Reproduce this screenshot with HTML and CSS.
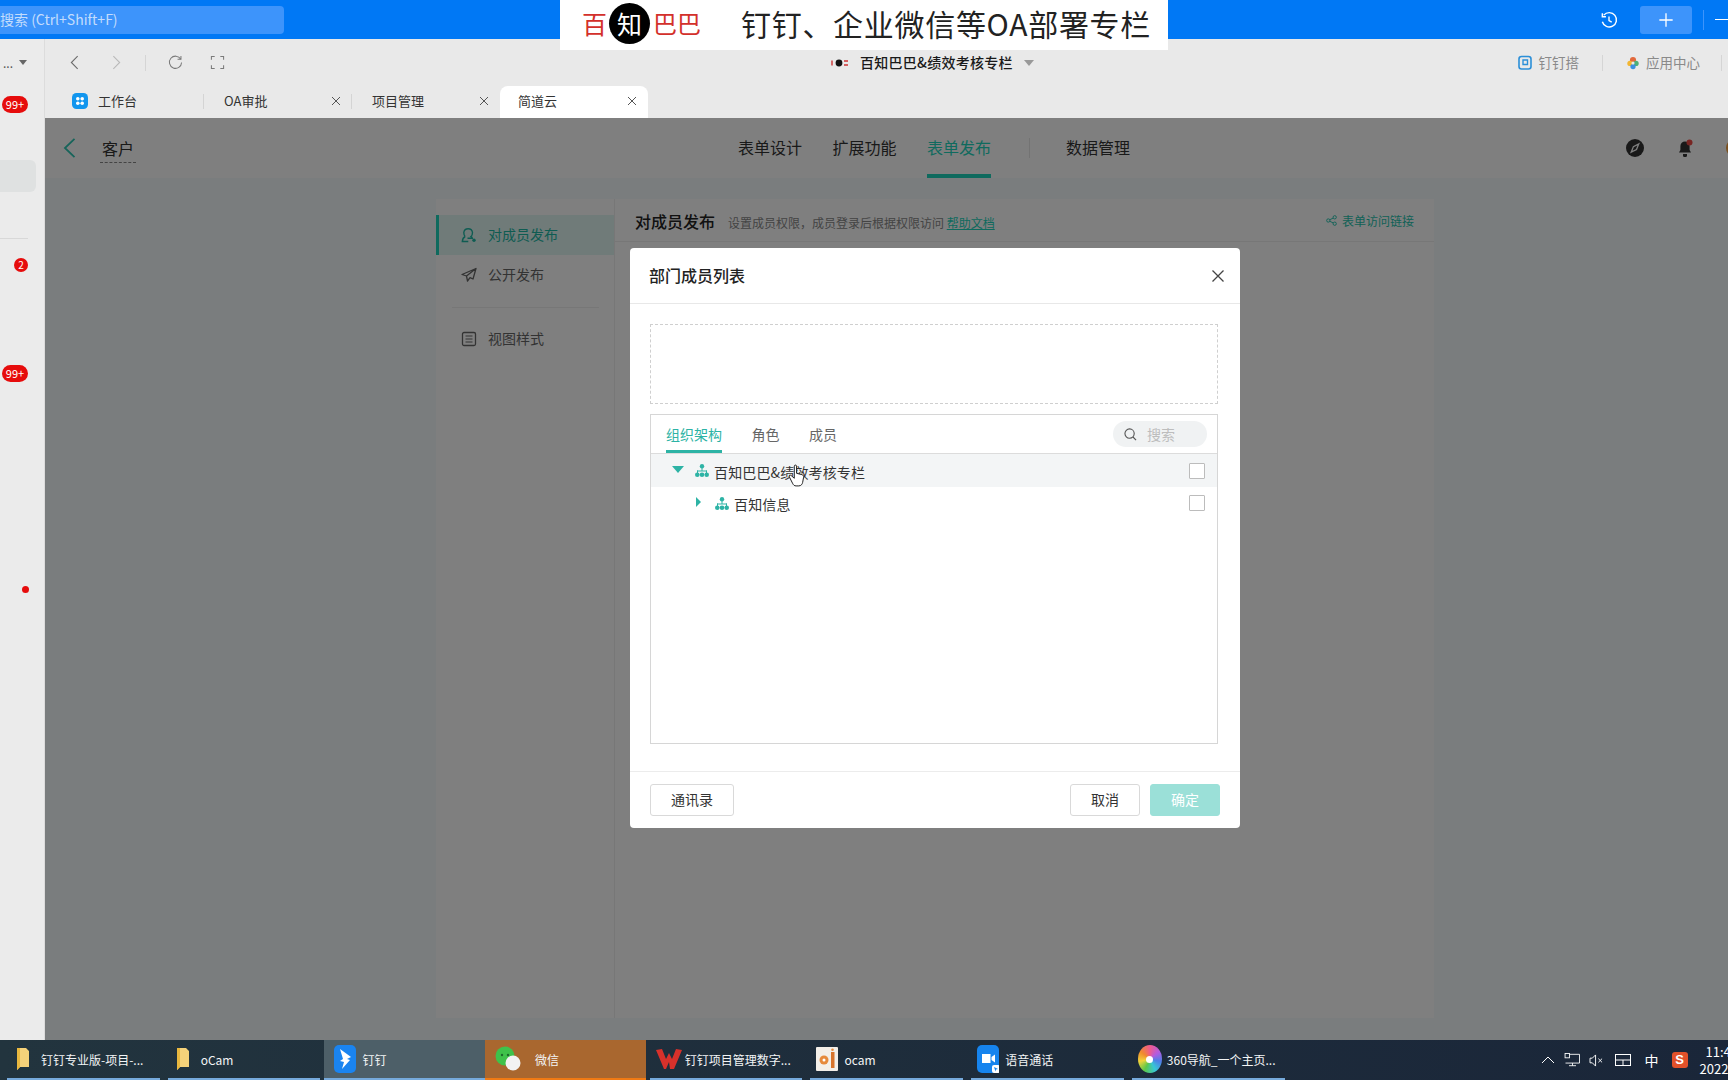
FILE: index.html
```html
<!DOCTYPE html>
<html lang="zh-CN">
<head>
<meta charset="utf-8">
<title>部门成员列表</title>
<link rel="stylesheet" href="styles.css">
</head>
<body>
<div class="screen">
  <header class="topbar">
    <div class="global-search">搜索 (Ctrl+Shift+F)</div>
    <div class="top-actions">
      <svg class="ico-history" viewBox="0 0 20 20" width="18" height="18"><path d="M4.2 4.6A8 8 0 1 1 2.6 12" fill="none" stroke="#fff" stroke-width="1.6"/><path d="M2.6 2.4v4h4" fill="none" stroke="#fff" stroke-width="1.6"/><path d="M10 6v4.6l3 1.8" fill="none" stroke="#fff" stroke-width="1.5"/></svg>
      <div class="plus-btn"><svg viewBox="0 0 18 18" width="16" height="16"><path d="M9 1.5v15M1.5 9h15" stroke="#fff" stroke-width="1.5"/></svg></div>
      <span class="top-sep"></span>
      <span class="top-min"></span>
    </div>
  </header>

  <div class="window">
    <aside class="sidebar">
      <div class="side-top"><span>...</span><span class="side-caret"></span></div>
      <span class="badge badge-a">99+</span>
      <div class="side-item"></div>
      <div class="side-line"></div>
      <span class="badge badge-num">2</span>
      <span class="badge badge-b">99+</span>
      <span class="side-dot"></span>
    </aside>

    <div class="workspace">
      <div class="toolbar">
        <div class="tool-nav">
          <svg viewBox="0 0 10 16" width="9" height="15"><path d="M8.5 1 1.5 8l7 7" fill="none" stroke="#6b6b6b" stroke-width="1.2"/></svg>
          <svg class="tool-fwd" viewBox="0 0 10 16" width="9" height="15"><path d="M1.5 1l7 7-7 7" fill="none" stroke="#b9b9b9" stroke-width="1.2"/></svg>
          <span class="tool-sep"></span>
          <svg class="tool-ref" viewBox="0 0 16 16" width="15" height="15"><path d="M13.6 4.4A6.5 6.5 0 1 0 14.5 8" fill="none" stroke="#7a7a7a" stroke-width="1.1"/><path d="M13.8 1v3.6h-3.6" fill="none" stroke="#7a7a7a" stroke-width="1.1"/></svg>
          <svg class="tool-full" viewBox="0 0 16 16" width="15" height="15"><path d="M1.5 5V1.5H5M11 1.5h3.5V5M14.5 11v3.500H11M5 14.500H1.500V11" fill="none" stroke="#7a7a7a" stroke-width="1.1"/></svg>
        </div>
        <div class="org">
          <svg viewBox="0 0 20 10" width="20" height="10"><circle cx="9" cy="5" r="3.4" fill="#111"/><path d="M2 2.500v5M14 3h4M14 7h4" stroke="#c33" stroke-width="1.4"/></svg>
          <span class="org-name">百知巴巴&amp;绩效考核专栏</span>
          <span class="org-caret"></span>
        </div>
        <div class="tool-links">
          <svg viewBox="0 0 16 16" width="16" height="16"><rect x="2" y="1.500" width="12" height="12.500" rx="2.500" fill="none" stroke="#2b8fd8" stroke-width="1.6"/><path d="M6 5h4.500v4.500H6z" fill="none" stroke="#2b8fd8" stroke-width="1.4"/></svg>
          <span class="link-text">钉钉搭</span>
          <span class="link-sep"></span>
          <svg viewBox="0 0 16 16" width="14" height="16"><circle cx="8" cy="4.500" r="3.500" fill="#e2693c"/><circle cx="4.500" cy="8.500" r="3" fill="#f2b632"/><circle cx="11.500" cy="8.500" r="3" fill="#4caf7a"/><circle cx="8" cy="12" r="3" fill="#3b8fdf"/><circle cx="8" cy="8" r="1.800" fill="#e9e9e9"/></svg>
          <span class="link-text">应用中心</span>
          <span class="link-sep"></span>
        </div>
      </div>

      <div class="tabs">
        <div class="tab tab-home">
          <svg viewBox="0 0 16 16" width="16" height="16"><rect width="16" height="16" rx="4.500" fill="#1296ee"/><circle cx="5.800" cy="5.800" r="1.800" fill="#fff"/><circle cx="10.200" cy="5.800" r="1.800" fill="#fff"/><circle cx="5.800" cy="10.200" r="1.800" fill="#fff"/><circle cx="10.200" cy="10.200" r="1.800" fill="#fff"/></svg>
          <span class="tab-label">工作台</span>
        </div>
        <div class="tab"><span class="tab-label">OA审批</span><svg class="tab-x" viewBox="0 0 10 10" width="10" height="10"><path d="M1 1l8 8M9 1 1 9" stroke="#555" stroke-width="1"/></svg></div>
        <div class="tab tab-last"><span class="tab-label">项目管理</span><svg class="tab-x" viewBox="0 0 10 10" width="10" height="10"><path d="M1 1l8 8M9 1 1 9" stroke="#555" stroke-width="1"/></svg></div>
        <div class="tab tab-active"><span class="tab-label">简道云</span><svg class="tab-x" viewBox="0 0 10 10" width="10" height="10"><path d="M1 1l8 8M9 1 1 9" stroke="#555" stroke-width="1"/></svg></div>
      </div>

      <div class="app">
        <div class="app-head">
          <div class="app-left">
            <svg viewBox="0 0 14 22" width="13" height="20"><path d="M12.500 1 2 11l10.500 10" fill="none" stroke="#2fc9b5" stroke-width="2"/></svg>
            <span class="app-name">客户</span>
          </div>
          <nav class="app-nav">
            <span class="nav-item">表单设计</span>
            <span class="nav-item">扩展功能</span>
            <span class="nav-item nav-on">表单发布</span>
            <span class="nav-sep"></span>
            <span class="nav-item">数据管理</span>
          </nav>
          <div class="app-right">
            <svg viewBox="0 0 18 18" width="18" height="18"><circle cx="9" cy="9" r="9" fill="#333"/><path d="M12.800 4.800 10.500 10.500 5.200 13.200 7.400 7.600z" fill="none" stroke="#fff" stroke-width="1.300"/></svg>
            <svg viewBox="0 0 18 18" width="18" height="18"><path d="M9 2.500a4.600 4.600 0 0 0-4.600 4.600V11L3 13.600h12L13.600 11V7.100A4.600 4.600 0 0 0 9 2.500z" fill="#333"/><path d="M7 15h4v1.200a2 2 0 0 1-4 0z" fill="#333"/><circle cx="13.500" cy="3.500" r="3" fill="#f04a45"/></svg>
            <span class="app-avatar"></span>
          </div>
        </div>

        <div class="app-body">
          <section class="card">
            <div class="card-side">
              <div class="side-row side-row-on">
                <svg viewBox="0 0 16 16" width="16" height="16"><path d="M4.200 9.500C3 8.500 2.800 7 2.800 5.500A4.400 4.400 0 0 1 11.500 5.500c0 1.500-.3 3-1.500 4 .8.400 1.200 1 1.300 1.800H6.500M4.200 9.500C2.500 10.300 1.500 11.800 1.300 14.500h6" fill="none" stroke="currentColor" stroke-width="1.400"/><circle cx="13" cy="13.200" r="1.700" fill="currentColor"/></svg>
                <span>对成员发布</span>
              </div>
              <div class="side-row">
                <svg viewBox="0 0 16 16" width="16" height="16"><path d="M15 1.500 1 7.500l4.500 1.500L15 1.500zM5.500 9l1 5 2.500-3.400 3 1.400L15 1.500" fill="none" stroke="currentColor" stroke-width="1.300" stroke-linejoin="round"/></svg>
                <span>公开发布</span>
              </div>
              <div class="side-rule"></div>
              <div class="side-row">
                <svg viewBox="0 0 16 16" width="16" height="16"><rect x="1.500" y="1.500" width="13" height="13" rx="1.500" fill="none" stroke="currentColor" stroke-width="1.300"/><path d="M4.500 5h7M4.500 8h7M4.500 11h7" stroke="currentColor" stroke-width="1.200"/></svg>
                <span>视图样式</span>
              </div>
            </div>
            <div class="card-main">
              <div class="card-head">
                <h2 class="card-title">对成员发布</h2>
                <p class="card-desc">设置成员权限，成员登录后根据权限访问 <a class="card-help">帮助文档</a></p>
                <div class="card-link">
                  <svg viewBox="0 0 12 12" width="11" height="11"><circle cx="2.500" cy="6" r="1.800" fill="none" stroke="currentColor"/><circle cx="9.500" cy="2.500" r="1.800" fill="none" stroke="currentColor"/><circle cx="9.500" cy="9.500" r="1.800" fill="none" stroke="currentColor"/><path d="M4 5.200 8 3.300M4 6.800l4 1.900" stroke="currentColor"/></svg>
                  <span>表单访问链接</span>
                </div>
              </div>
            </div>
          </section>
        </div>

        <div class="overlay">
          <div class="modal">
            <div class="modal-head">
              <h3 class="modal-title">部门成员列表</h3>
              <svg viewBox="0 0 14 14" width="14" height="14"><path d="M1.500 1.500l11 11M12.500 1.500l-11 11" stroke="#444" stroke-width="1.300"/></svg>
            </div>
            <div class="modal-body">
              <div class="picked"></div>
              <div class="panel">
                <div class="panel-tabs">
                  <span class="ptab ptab-on">组织架构</span>
                  <span class="ptab">角色</span>
                  <span class="ptab">成员</span>
                  <div class="psearch">
                    <svg viewBox="0 0 14 14" width="13" height="13"><circle cx="6" cy="6" r="5" fill="none" stroke="#555" stroke-width="1.200"/><path d="M9.700 9.700 13 13" stroke="#555" stroke-width="1.200"/></svg>
                    <span>搜索</span>
                  </div>
                </div>
                <div class="tree-row tree-hover">
                  <span class="tree-toggle"><span class="caret-down"></span></span>
                  <svg class="org-ico" viewBox="0 0 14 13" width="14" height="13"><use href="#org"/></svg>
                  <span class="tree-text">百知巴巴&amp;绩效考核专栏</span>
                  <span class="check"></span>
                </div>
                <div class="tree-row tree-child">
                  <span class="tree-toggle"><span class="caret-right"></span></span>
                  <svg class="org-ico" viewBox="0 0 14 13" width="14" height="13"><use href="#org"/></svg>
                  <span class="tree-text">百知信息</span>
                  <span class="check"></span>
                </div>
              </div>
            </div>
            <div class="modal-foot">
              <button class="btn btn-book">通讯录</button>
              <button class="btn btn-cancel">取消</button>
              <button class="btn btn-ok">确定</button>
            </div>
          </div>
        </div>
      </div>
    </div>
  </div>

  <footer class="taskbar">
    <div class="task task-folder">
      <svg viewBox="0 0 14 24" width="14" height="24"><use href="#folder"/></svg>
      <span class="task-label">钉钉专业版-项目-...</span>
    </div>
    <div class="task task-folder task-folder-b">
      <svg viewBox="0 0 14 24" width="14" height="24"><use href="#folder"/></svg>
      <span class="task-label">oCam</span>
    </div>
    <div class="task task-active">
      <svg viewBox="0 0 22 28" width="22" height="28"><rect width="22" height="28" rx="5" fill="#1a84f0"/><path d="M6 4l11 8-4 2 3 1-8 9 2-7-4-1 3-2z" fill="#fff"/></svg>
      <span class="task-label">钉钉</span>
    </div>
    <div class="task task-orange">
      <svg viewBox="0 0 26 26" width="26" height="26"><circle cx="10" cy="10" r="9.500" fill="#3fc24a"/><circle cx="18" cy="17" r="7.500" fill="#f2f2f2"/><circle cx="7" cy="9" r="1.200" fill="#1d6b2a"/><circle cx="13" cy="9" r="1.200" fill="#1d6b2a"/></svg>
      <span class="task-label">微信</span>
    </div>
    <div class="task task-wps">
      <svg viewBox="0 0 26 20" width="26" height="20"><path d="M0 1l6-1 4 10 3-6 3 6 4-10 6 1-8 19h-4l-1-7-3 7H8z" fill="#d8312b"/></svg>
      <span class="task-label">钉钉项目管理数字...</span>
    </div>
    <div class="task">
      <svg viewBox="0 0 22 24" width="22" height="24"><rect width="22" height="24" rx="1" fill="#f3efe9"/><circle cx="8" cy="13" r="4.500" fill="#e68a3c"/><circle cx="8" cy="13" r="1.500" fill="#fff"/><rect x="15" y="5" width="3.500" height="16" fill="#d8742c"/><circle cx="16.500" cy="2.800" r="1.300" fill="#e68a3c"/></svg>
      <span class="task-label">ocam</span>
    </div>
    <div class="task">
      <svg viewBox="0 0 22 28" width="22" height="28"><rect width="22" height="28" rx="5" fill="#1684ee"/><path d="M5 9h8.500v9H5zM14.500 12 18 9.500v8L14.500 15z" fill="#fff"/><rect x="15" y="20" width="8" height="8" rx="2" fill="#fff"/><path d="M17 22l4 2-2 .5-.5 2z" fill="#1684ee"/></svg>
      <span class="task-label">语音通话</span>
    </div>
    <div class="task task-360">
      <span class="ico-360"></span>
      <span class="task-label">360导航_一个主页...</span>
    </div>
    <div class="tray">
      <svg viewBox="0 0 14 8" width="14" height="8"><path d="M1 7l6-6 6 6" fill="none" stroke="#fff" stroke-width="1"/></svg>
      <svg class="tray-net" viewBox="0 0 18 16" width="17" height="14"><path d="M4 1.500h13v10H1M9 11.500v3M5 14.500h8" fill="none" stroke="#fff" stroke-width="1"/><rect x=".5" y=".5" width="5" height="5" fill="#1c2a3b" stroke="#fff"/></svg>
      <svg class="tray-vol" viewBox="0 0 16 14" width="15" height="13"><path d="M1 4.500h2.500L7 1v12L3.500 9.500H1z" fill="none" stroke="#fff" stroke-width="1"/><path d="M10 5l4 4M14 5l-4 4" stroke="#fff" stroke-width="1"/></svg>
      <svg class="tray-kbd" viewBox="0 0 16 12" width="16" height="12"><rect x=".5" y=".5" width="15" height="11" fill="none" stroke="#fff"/><path d="M.5 6h15M8 6v5.500" stroke="#fff"/></svg>
      <span class="tray-ime">中</span>
      <span class="tray-sogou">S</span>
      <div class="clock"><span class="clock-time">11:45</span><span>2022/1/5</span></div>
    </div>
  </footer>

  <div class="banner">
    <span class="ban-red ban-first">百</span>
    <span class="ban-dot">知</span>
    <span class="ban-red">巴巴</span>
    <span class="ban-text">钉钉、企业微信等OA部署专栏</span>
  </div>

  <svg class="cursor" viewBox="0 0 20 26" width="18" height="24"><path d="M7 2c0-1.500 2.500-1.500 2.500 0v8l6 1.500c1.500.5 2 1.500 1.800 3l-1 5.500c-.3 2-1.800 4-4.300 4H9c-2 0-3-1-4-3L1.500 14c-.7-1.500 1-2.500 2-1.500L7 15.500z" fill="#fff" stroke="#222" stroke-width="1.100"/></svg>

  <svg class="defs" width="0" height="0">
    <defs>
      <g id="org" fill="#2db3a5"><circle cx="7" cy="2.200" r="2.200"/><rect x="6.500" y="3" width="1" height="4"/><rect x="2" y="6.500" width="10" height="1"/><rect x="2" y="6.500" width="1" height="3"/><rect x="11" y="6.500" width="1" height="3"/><circle cx="2.300" cy="10.700" r="2.300"/><circle cx="7" cy="10.700" r="2.300"/><circle cx="11.700" cy="10.700" r="2.300"/></g>
      <g id="folder"><path d="M1 1l9 0 3 3v16l-9 0-3 3z" fill="#f5d27a"/><path d="M1 1h3v19l-3 3z" fill="#e9b83f"/></g>
    </defs>
  </svg>
</div>
</body>
</html>
```
FILE: styles.css
```css
* { box-sizing: border-box; }
html, body { margin: 0; height: 100%; overflow: hidden; }
body { font-family: "Noto Sans CJK SC", "Liberation Sans", sans-serif; font-size: 14px; color: #333; }
svg { display: block; flex: none; }
h2, h3, p { margin: 0; }

.screen { position: relative; width: 1728px; height: 1080px; display: flex; flex-direction: column; overflow: hidden; background: #e9e9e9; }

/* top bar */
.topbar { height: 39px; flex: none; background: #0078f5; display: flex; align-items: center; }
.global-search { width: 284px; height: 28px; background: #3d94fb; border-radius: 0 4px 4px 0; color: #c3dcfc; line-height: 26px; white-space: nowrap; }
.top-actions { margin-left: auto; display: flex; align-items: center; }
.ico-history { margin-right: 22px; }
.plus-btn { width: 52px; height: 28px; background: #3d94fb; border-radius: 3px; display: flex; align-items: center; justify-content: center; }
.top-sep { width: 1px; height: 20px; background: #3d94fb; margin-left: 11px; }
.top-min { width: 13px; height: 1px; background: #fff; margin-left: 11px; }

/* window */
.window { flex: 1; min-height: 0; display: flex; }
.sidebar { width: 45px; flex: none; border-right: 1px solid #dcdcdc; background: #ebebeb; display: flex; flex-direction: column; align-items: flex-start; }
.side-top { height: 47px; width: 100%; display: flex; align-items: center; padding-left: 3px; gap: 6px; font-size: 12px; color: #555; }
.side-caret { width: 0; height: 0; border-left: 4px solid transparent; border-right: 4px solid transparent; border-top: 5px solid #666; }
.badge { background: #e60c0c; color: #fff; font-size: 11px; border-radius: 9px; height: 17px; line-height: 17px; text-align: center; }
.badge-a { width: 26px; margin: 10px 0 0 2px; }
.side-item { width: 36px; height: 32px; background: #dfe1e1; border-radius: 0 6px 6px 0; margin-top: 47px; }
.side-line { width: 28px; height: 1px; background: #d8d8d8; margin-top: 46px; }
.badge-num { width: 14px; height: 14px; line-height: 14px; font-size: 10px; margin: 19px 0 0 14px; }
.badge-b { width: 26px; margin: 93px 0 0 2px; }
.side-dot { width: 7px; height: 7px; border-radius: 50%; background: #e60c0c; margin: 204px 0 0 22px; }

.workspace { flex: 1; min-width: 0; display: flex; flex-direction: column; overflow: hidden; }

/* toolbar */
.toolbar { height: 47px; flex: none; display: flex; align-items: center; background: #e9e9e9; }
.tool-nav { display: flex; align-items: center; width: 785px; padding-left: 25px; }
.tool-fwd { margin-left: 33px; }
.tool-sep { width: 1px; height: 16px; background: #d5d5d5; margin-left: 24px; }
.tool-ref { margin-left: 22px; }
.tool-full { margin-left: 27px; }
.org { display: flex; align-items: center; }
.org-name { margin-left: 10px; color: #1a1a1a; font-weight: 500; white-space: nowrap; letter-spacing: .25px; padding-bottom: 2px; }
.org-caret { margin-left: 11px; width: 0; height: 0; border-left: 5px solid transparent; border-right: 5px solid transparent; border-top: 6px solid #999; }
.tool-links { margin-left: auto; display: flex; align-items: center; }
.link-text { color: #8a8a8a; margin-left: 6px; white-space: nowrap; font-size: 13.5px; padding-bottom: 2px; }
.link-sep { width: 1px; height: 16px; background: #d5d5d5; margin: 0 23px; }
.link-sep:last-child { margin-right: 6px; margin-left: 21px; }

/* tabs */
.tabs { height: 32px; flex: none; display: flex; padding-left: 11px; background: #e9e9e9; }
.tab { width: 148px; height: 32px; display: flex; align-items: center; padding: 0 11px 0 20px; font-size: 13px; color: #333; background: linear-gradient(#d4d4d4, #d4d4d4) right 8px / 1px 15px no-repeat; }
.tab-label { padding-bottom: 3px; }
.tab-home { padding-left: 16px; }
.tab-home svg { margin-bottom: 3px; }
.tab-home .tab-label { margin-left: 10px; }
.tab-x { margin-left: auto; margin-bottom: 2px; }
.tab-active { background: #fff; border-radius: 8px 8px 0 0; padding-left: 18px; }
.tab-last { background: none; }

/* app */
.app { position: relative; width: 1780px; flex: 1; min-height: 0; background: #f4fafc; display: flex; flex-direction: column; }
.app-head { height: 60px; flex: none; background: #fff; display: grid; grid-template-columns: 1fr auto 1fr; align-items: center; }
.app-left { display: flex; align-items: center; padding-left: 18px; }
.app-name { margin-left: 24px; padding: 0 2px 2px; border-bottom: 1px dashed #888; font-size: 16px; color: #333; line-height: 24px; margin-top: 3px; }
.app-nav { display: flex; align-items: center; height: 60px; gap: 30.5px; font-size: 16px; transform: translateX(-1px); }
.nav-item { height: 60px; line-height: 58px; border-bottom: 4px solid transparent; color: #333; }
.nav-on { color: #1ed4bc; border-bottom-color: #1ed4bc; }
.nav-sep { width: 1px; height: 20px; background: #e6e6e6; margin: 0 6px 0 7px; }
.app-right { display: flex; justify-content: flex-end; align-items: center; gap: 32px; padding-right: 81px; }
.app-avatar { width: 18px; height: 18px; border-radius: 50%; background: #f6a340; }

.app-body { flex: 1; min-height: 0; padding: 21px 0 22px; display: flex; justify-content: center; }
.card { width: 998px; background: #fff; display: flex; }
.card-side { width: 179px; flex: none; border-right: 1px solid #eeeeee; padding-top: 16px; }
.side-row { height: 40px; display: flex; align-items: center; padding-left: 25px; gap: 11px; color: #666; }
.side-row span { padding-bottom: 2px; }
.side-row-on { background: #e0f7f3; color: #1fb8a5; border-left: 3px solid #1ed4bc; padding-left: 22px; }
.side-rule { height: 1px; background: #eeeeee; margin: 12px 15px 11px 16px; }
.card-main { flex: 1; min-width: 0; }
.card-head { height: 43px; border-bottom: 1px solid #eeeeee; display: flex; align-items: center; padding: 0 20px; }
.card-title { font-size: 16px; font-weight: 500; color: #222; padding-top: 2px; }
.card-desc { font-size: 12px; color: #888; margin-left: 13px; padding-top: 5px; white-space: nowrap; }
.card-help { color: #1ed4bc; text-decoration: underline; }
.card-link { margin-left: auto; display: flex; align-items: center; gap: 5px; font-size: 12px; color: #1fc4ae; }

/* modal */
.overlay { position: absolute; inset: 0; background: rgba(0,0,0,.5); display: flex; justify-content: center; align-items: flex-start; padding-top: 130px; }
.modal { width: 610px; height: 580px; background: #fff; border-radius: 4px; display: flex; flex-direction: column; }
.modal-head { height: 56px; flex: none; border-bottom: 1px solid #e8e8e8; display: flex; align-items: center; justify-content: space-between; padding: 0 15px 0 19px; }
.modal-title { font-size: 16px; font-weight: 500; color: #222; padding-bottom: 2px; }
.modal-body { flex: 1; min-height: 0; padding: 20px 22px 0 20px; }
.picked { height: 80px; border: 1px dashed #cfcfcf; }
.panel { height: 330px; margin-top: 10px; border: 1px solid #d6d6d6; }
.panel-tabs { height: 39px; border-bottom: 1px solid #dcdcdc; display: flex; padding-left: 15px; gap: 29.5px; }
.ptab { height: 38px; line-height: 38px; color: #666; }
.ptab-on { color: #2db3a5; border-bottom: 3px solid #2db3a5; }
.psearch { margin: 6px 10px 0 auto; width: 94px; height: 26px; border-radius: 13px; background: #f0f2f3; display: flex; align-items: center; padding-left: 11px; gap: 10px; color: #bdbdbd; }
.tree-row { height: 33px; display: flex; align-items: center; padding: 0 12px 0 21px; color: #333; }
.tree-text { letter-spacing: .15px; padding-top: 2px; }
.tree-hover { background: #f3f5f6; }
.tree-child { padding-left: 41px; height: 32px; }
.tree-toggle { width: 12px; height: 12px; display: flex; align-items: center; justify-content: center; margin-right: 11px; margin-top: -3px; }
.caret-down { width: 0; height: 0; border-left: 6px solid transparent; border-right: 6px solid transparent; border-top: 7px solid #2db3a5; }
.caret-right { width: 0; height: 0; border-top: 5px solid transparent; border-bottom: 5px solid transparent; border-left: 5px solid #2db3a5; }
.org-ico { margin-right: 5px; }
.check { margin-left: auto; width: 16px; height: 16px; border: 1px solid #bcbcbc; background: #fff; border-radius: 1px; }
.modal-foot { height: 57px; flex: none; border-top: 1px solid #ececec; display: flex; padding: 12px 20px 0; gap: 10px; }
.btn { height: 32px; width: 70px; font: inherit; border: 1px solid #d9d9d9; border-radius: 3px; background: #fff; color: #333; padding: 0 0 2px; }
.btn-book { width: 84px; margin-right: auto; }
.btn-ok { background: #9be0d8; border-color: #9be0d8; color: #fff; }

/* taskbar */
.taskbar { height: 40px; flex: none; background: linear-gradient(90deg, #22343e, #1a2639); display: flex; padding-left: 3px; color: #fff; font-size: 12px; }
.task { width: 152.7px; margin: 0 4px; flex: none; height: 40px; border-bottom: 2px solid #76aadc; display: flex; align-items: center; padding-left: 6px; gap: 6px; white-space: nowrap; }
.task-folder { padding-left: 9px; gap: 11px; }
.task-folder-b { padding-left: 8px; }
.task-wps { gap: 3px; }
.task-360 { gap: 5px; }
.task-label { color: #f3f5f6; }
.task-active { width: 160.7px; margin: 0; background: #4d5f68; padding-left: 10px; }
.task-orange { width: 160.7px; margin: 0; background: #a9672f; border-bottom-color: #f07a14; padding-left: 10px; gap: 14px; }
.ico-360 { width: 24px; height: 28px; border-radius: 50%; flex: none; background: conic-gradient(#ee5a8f, #b25be0, #4f7ee8, #37c6d6, #5cc84a, #f0d23a, #f08a2e, #ee5a8f); display: flex; align-items: center; justify-content: center; }
.ico-360::after { content: ""; width: 7px; height: 7px; background: #fff; border-radius: 50%; }
.tray { margin-left: 252px; display: flex; align-items: center; height: 40px; flex: none; }
.tray-net { margin-left: 9px; }
.tray-vol { margin-left: 8px; }
.tray-kbd { margin-left: 11px; }
.tray-ime { margin-left: 14px; font-size: 14px; }
.tray-sogou { margin-left: 13px; width: 16px; height: 16px; background: #e2512a; border-radius: 3px; font-size: 13px; font-weight: 700; line-height: 16px; text-align: center; font-family: "Liberation Sans", sans-serif; }
.clock { margin-left: 12px; width: 40px; display: flex; flex-direction: column; font-size: 13px; line-height: 17px; white-space: nowrap; }
.clock-time { padding-left: 6px; }

/* banner over the top bar */
.banner { position: absolute; left: 560px; top: 0; width: 608px; height: 50px; background: #fff; display: flex; align-items: center; padding: 0 0 4px 22px; white-space: nowrap; }
.ban-red { color: #d3302b; font-size: 24px; line-height: 30px; }
.ban-first { font-size: 25px; }
.ban-dot { width: 41px; height: 41px; margin: 0 3px 0 2px; background: #000; color: #fff; border-radius: 50%; font-size: 25px; line-height: 40px; text-align: center; }
.ban-text { margin-left: 40px; font-size: 30px; line-height: 40px; color: #222; letter-spacing: .7px; }

.cursor { position: absolute; left: 788px; top: 464px; }
.defs { position: absolute; }
```
